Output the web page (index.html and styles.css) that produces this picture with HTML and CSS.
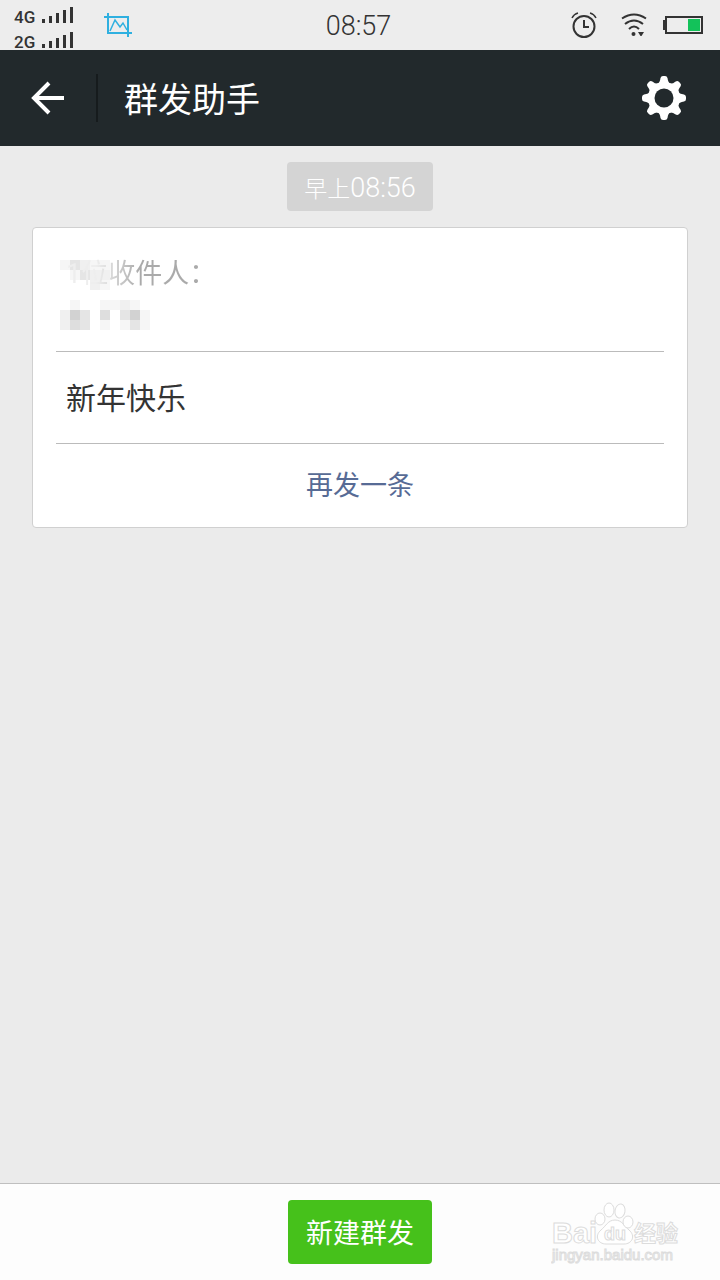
FILE: index.html
```html
<!DOCTYPE html>
<html lang="zh-CN">
  <head>
    <title>群发助手</title>
    <meta charset="utf-8">
    <meta name="viewport" content="width=device-width">
    <link rel="stylesheet" href="styles.css">
  </head>
  <body>

  <div class="status">
    <div class="status-left">
      <div class="signals">
        <div class="signal">
          <span>4G</span>
          <svg width="32" height="16" viewBox="0 0 32 16" fill="#333"><path d="M0 12h3v4H0zM7 9h3v7H7zM14 6h3v10h-3zM21 3h3v13h-3zM28 0h3v16h-3z"/></svg>
        </div>
        <div class="signal">
          <span>2G</span>
          <svg width="32" height="16" viewBox="0 0 32 16" fill="#333"><path d="M0 12h3v4H0zM7 9h3v7H7zM14 6h3v10h-3zM21 3h3v13h-3zM28 0h3v16h-3z"/></svg>
        </div>
      </div>
      <svg class="crop" width="28" height="24" viewBox="0 0 28 24" fill="none" stroke="#2fb0e0" stroke-width="2"><path d="M0 4h24v20M4 0v20h24"/><path d="M6 18l5-11 5 7 3-4 4 7" stroke-width="1.5"/></svg>
    </div>
    <time class="clock">08:57</time>
    <div class="status-right">
      <svg width="26" height="26" viewBox="0 0 26 26" fill="none" stroke="#333" stroke-width="2"><circle cx="13" cy="14.500" r="10.500"/><path d="M13 8v7h5"/><path d="M1 6q2-4 6-5M25 6q-2-4-6-5" stroke-width="1.5"/></svg>
      <svg width="26" height="24" viewBox="0 0 26 24" fill="none" stroke="#333" stroke-width="2"><path d="M1 5.500q12-8 24 0M4 11q9-7 18 0M8 16q5-5 10 0"/><circle cx="12.500" cy="21" r="2" fill="#333" stroke="none"/><path d="M17 19h6l-2.500 4h-1z" fill="#333" stroke="none"/></svg>
      <svg width="40" height="18" viewBox="0 0 40 18"><path d="M0 4h3v10H0z" fill="#333"/><path d="M3 1h36v16H3z" fill="none" stroke="#333" stroke-width="2"/><path d="M25 3h12v12H25z" fill="#13c25a"/></svg>
    </div>
  </div>

  <header class="bar">
    <button class="icon-btn back" type="button" aria-label="返回">
      <svg width="34" height="34" viewBox="0 0 34 34" fill="none" stroke="#fff" stroke-width="4"><path d="M18 2L3 17l15 15M3 17h30"/></svg>
    </button>
    <h1>群发助手</h1>
    <button class="icon-btn settings" type="button" aria-label="设置">
      <svg width="44" height="44" viewBox="-22 -22 44 44">
        <g fill="#fff">
          <circle r="16"/>
          <path id="tooth" d="M-7-14Q-4-15-3.500-20Q-3-22-1-22H1Q3-22 3.500-20Q4-15 7-14V14Q4 15 3.500 20Q3 22 1 22H-1Q-3 22-3.500 20Q-4 15-7 14z"/>
          <use href="#tooth" transform="rotate(45)"/>
          <use href="#tooth" transform="rotate(90)"/>
          <use href="#tooth" transform="rotate(135)"/>
        </g>
        <circle r="9.500" fill="#22292c"/>
      </svg>
    </button>
  </header>

  <main>
    <div class="stamp">早上<span>08:56</span></div>

    <section class="card">
      <div class="recipients">
        <p>1位收件人：</p>
        <!-- hidden names -->
        <svg class="mosaic" width="100" height="70" viewBox="0 0 10 7" shape-rendering="crispEdges">
          <path fill="#f6f6f6" d="M0 0h1v1H0zM3 0h2v1H3zM1 1h1v1H1zM4 2h1v1H4zM1 4h1v1H1zM4 4h2v1H4zM7 4h1v1H7zM8 5h1v1H8zM4 6h1v1H4zM6 6h1v1H6zM8 6h1v1H8z"/>
          <path fill="#f0f0f0" d="M2 0h1v1H2zM3 1h2v1H3zM3 2h1v1H3zM6 4h1v1H6zM0 5h1v2H0z"/>
          <path fill="#e5e5e5" d="M1 0h1v1H1zM2 1h1v1H2zM2 5h1v2H2zM6 5h1v1H6zM7 6h1v1H7z"/>
          <path fill="#dedede" d="M4 5h1v1H4zM1 6h1v1H1z"/>
          <path fill="#d2d2d2" d="M1 5h1v1H1zM7 5h1v1H7z"/>
        </svg>
      </div>
      <p class="message">新年快乐</p>
      <button class="again" type="button">再发一条</button>
    </section>
  </main>

  <footer>
    <button class="create" type="button">新建群发</button>
    <svg class="watermark" width="132" height="66" viewBox="0 0 132 66" fill="#fff" stroke="#dcdcdc">
      <text class="mark" x="1" y="43" font-size="29">Bai</text>
      <path d="M64 20c7 0 9 6 14 10 7 6 3 14-5 14H55c-8 0-12-8-5-14 5-4 7-10 14-10z"/>
      <ellipse cx="49" cy="19" rx="5" ry="6"/>
      <ellipse cx="58" cy="10" rx="5" ry="7"/>
      <ellipse cx="69" cy="11" rx="5" ry="7" transform="rotate(10 69 11)"/>
      <ellipse cx="77" cy="22" rx="5" ry="6"/>
      <text class="mark" x="53" y="40" font-size="18">du</text>
      <text class="mark" x="83" y="41" font-size="22">经验</text>
      <text class="site" x="1" y="60" font-size="15">jingyan.baidu.com</text>
    </svg>
  </footer>

  </body>
</html>
```
FILE: styles.css
```css
html {
  height: 100%;
}
body {
  margin: 0;
  min-height: 100%;
  display: flex;
  flex-direction: column;
  background: #ebebeb;
  color: #333;
  font-family: Roboto, "Noto Sans CJK SC", sans-serif;
  font-weight: 300;
}

h1, p {
  margin: 0;
  font-weight: 400;
}

button {
  margin: 0;
  padding: 0;
  border: 0;
  background: none;
  font: inherit;
  cursor: pointer;
}

svg {
  display: block;
  flex: none;
}

.status {
  display: grid;
  grid-template-columns: 1fr auto 1fr;
  align-items: center;
  height: 50px;
  padding: 0 17px 0 14px;
  background: #ededed;
}

.status-left,
.status-right {
  display: flex;
  align-items: center;
}

.status-left {
  gap: 30px;
}

.status-right {
  justify-content: flex-end;
  gap: 24px;
  padding-bottom: 4px;
}

.status-right svg:last-child {
  margin-left: -8px;
}

.signals {
  padding-top: 4px;
}

.crop {
  margin-bottom: 4px;
}

.signal {
  display: flex;
  gap: 6px;
  height: 25px;
}

.signal span {
  width: 22px;
  font: 500 17px/26px Roboto, sans-serif;
}

.signal svg {
  margin-top: 3px;
}

.clock {
  padding-bottom: 2px;
  font-size: 27px;
  line-height: 32px;
}

.bar {
  display: flex;
  align-items: center;
  height: 96px;
  background: #22292c;
  color: #fff;
}

.icon-btn {
  display: flex;
  align-items: center;
}

.back {
  width: 98px;
  height: 48px;
  padding-left: 31px;
  border-right: 2px solid #161b1d;
}

.bar h1 {
  flex: 1;
  padding: 4px 0 0 26px;
  font-size: 34px;
  line-height: 48px;
}

.settings {
  margin-right: 34px;
}

main {
  flex: 1;
  display: flex;
  flex-direction: column;
  align-items: center;
  gap: 16px;
  padding: 16px 32px;
}

.stamp {
  height: 45px;
  padding: 4px 17px 0;
  border-radius: 4px;
  background: #d4d4d4;
  color: #fff;
  font-size: 23px;
  line-height: 45px;
}

.stamp span {
  font-size: 27px;
}

.card {
  align-self: stretch;
  padding: 0 23px;
  border: 1px solid #d0d0d0;
  border-radius: 4px;
  background: #fff;
}

.recipients {
  position: relative;
  height: 123px;
  border-bottom: 1px solid #bbb;
}

.recipients p {
  position: relative;
  z-index: 1;
  padding: 26px 10px;
  background: linear-gradient(to right, #eee 40px, #ddd 52px, #aaa 84px);
  background-clip: text;
  -webkit-background-clip: text;
  color: transparent;
  font-size: 27px;
  line-height: 40px;
}

.mosaic {
  position: absolute;
  left: 4px;
  top: 32px;
}

.message {
  padding: 27px 10px 24px;
  border-bottom: 1px solid #bbb;
  font-size: 30px;
  line-height: 40px;
}

.again {
  display: block;
  width: 100%;
  padding-top: 2px;
  color: #576b95;
  font-size: 27px;
  font-weight: 400;
  line-height: 81px;
}

footer {
  position: relative;
  display: flex;
  justify-content: center;
  padding: 16px;
  border-top: 1px solid #bfbfbf;
  background: #fdfdfd;
}

.create {
  padding: 4px 18px 0;
  border-radius: 4px;
  background: #46c11b;
  color: #fff;
  font-size: 27px;
  font-weight: 400;
  line-height: 60px;
}

.watermark {
  position: absolute;
  right: 37px;
  bottom: 14px;
}

.mark {
  font-family: "Liberation Sans", "Noto Sans CJK SC", sans-serif;
  font-weight: bold;
}

.site {
  font-family: "Liberation Sans", sans-serif;
}
```
